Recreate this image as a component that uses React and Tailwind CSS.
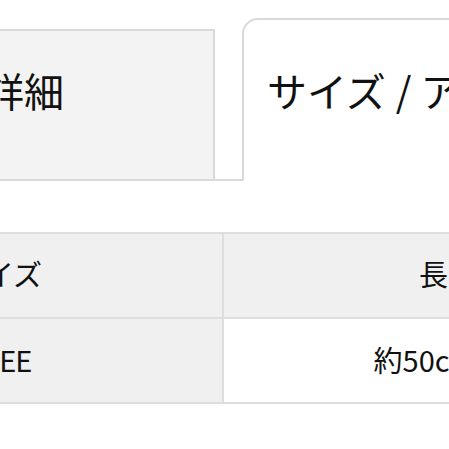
export default function App() {
    return (
        <div className="w-[449px] h-[449px] overflow-hidden bg-white text-[#111] font-['Noto_Sans_CJK_JP','Noto_Sans',sans-serif]">
            {/* tabs */}
            <div className="flex items-end ml-[-115px] pt-[18px] w-[760px]">
                <div className="w-[330px] h-[152px] shrink-0 bg-[#f3f3f3] border-t-2 border-r-2 border-b-2 border-[#d9d9d9] pl-[19px] pt-[39px]">
                    <span className="block text-[40px] leading-[40px] whitespace-nowrap">商品詳細</span>
                </div>
                <div className="w-[27px] shrink-0 border-b-2 border-[#d9d9d9]"></div>
                <div className="flex-1 h-[163px] bg-white border-t-2 border-l-2 border-[#d9d9d9] rounded-tl-[16px] pl-[23px] pt-[50px]">
                    <span className="block text-[40px] leading-[40px] whitespace-nowrap">
                        サイズ<span className="ml-[10px] mr-[9px]">/</span>アイテム情報
                    </span>
                </div>
            </div>

            {/* size table */}
            <div className="ml-[-224px] mt-[51px] w-[896px] grid grid-cols-[448px_448px] border-t-2 border-[#dedede] text-[29px] leading-[29px]">
                <div className="h-[85px] pb-[5px] flex items-center justify-center bg-[#f0f0f0] border-r-2 border-b-2 border-[#dedede]">サイズ</div>
                <div className="h-[85px] pb-[5px] flex items-center justify-center bg-[#f0f0f0] border-b-2 border-[#dedede]">長さ</div>
                <div className="h-[85px] pb-[3px] flex items-center justify-center bg-[#f0f0f0] border-r-2 border-b-2 border-[#dedede]">
                    <span className="tracking-[-1px]">FREE</span>
                </div>
                <div className="h-[85px] pb-[3px] flex items-center justify-center bg-white border-b-2 border-[#dedede]">
                    <span className="pl-[12px]">約50cm前後</span>
                </div>
            </div>
        </div>
    );
}
